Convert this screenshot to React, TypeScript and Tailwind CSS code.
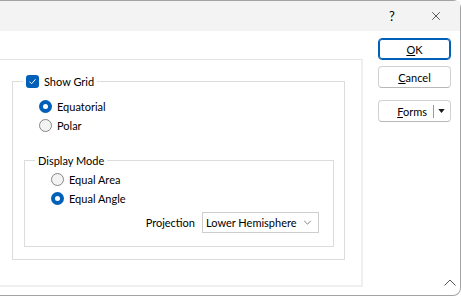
import { X } from "lucide-react";

function Radio({ checked, label }: { checked?: boolean; label: string }) {
  return (
    <div className="flex h-[19px] items-center gap-[5px]">
      {checked ? (
        <span className="flex size-[13px] items-center justify-center rounded-full bg-[#005fb8]">
          <span className="size-[5px] rounded-full bg-white" />
        </span>
      ) : (
        <span className="size-[13px] rounded-full border border-[#858585] bg-[#f3f3f3]" />
      )}
      <span>{label}</span>
    </div>
  );
}

function DialogButton({
  children,
  primary,
  className = "",
}: {
  children: React.ReactNode;
  primary?: boolean;
  className?: string;
}) {
  return (
    <button
      className={`flex h-[22px] w-[73px] items-center justify-center rounded-[4px] border bg-white ${
        primary
          ? "border-[#005fb8] shadow-[inset_0_0_0_1px_#005fb8]"
          : "border-[#d1d1d1] border-b-[#b8b8b8]"
      } ${className}`}
    >
      {children}
    </button>
  );
}

export default function App() {
  return (
    <div className="h-[296px] w-[461px] overflow-hidden whitespace-nowrap bg-white font-['Lato',sans-serif] text-[11px] leading-none text-black">
      <div className="flex h-[296px] flex-col rounded-r-[8px] border-y border-r border-[#a3a3a3] bg-white">
        <div className="flex h-[30px] shrink-0 items-center justify-end bg-[#f3f3f3] pr-[2px]">
          <div className="flex w-[44px] justify-center text-[13px]">?</div>
          <div className="flex w-[44px] justify-center">
            <X className="size-[14px]" strokeWidth={1.1} aria-hidden="true" />
          </div>
        </div>

        <div className="flex flex-1">
          <div className="mt-[28px] h-[228px] w-[363px] shrink-0 border-t border-r-2 border-b-2 border-t-[#e3e3e3] border-r-[#efefef] border-b-[#efefef]">
            <fieldset className="ml-[12px] mt-[14px] h-[186px] w-[333px] border border-[#dcdcdc]">
              <legend className="ml-[10px] flex h-[14px] items-center gap-[5px] px-[3px]">
                <span className="flex size-[13px] items-center justify-center rounded-[3px] bg-[#005fb8]">
                  <svg viewBox="0 0 12 12" className="size-[9px]" fill="none">
                    <path d="M2 6.2 4.8 9 10 3" stroke="white" strokeWidth="1.3" />
                  </svg>
                </span>
                <span>Show Grid</span>
              </legend>

              <div className="mt-[9px] pl-[26px]">
                <Radio checked label="Equatorial" />
                <Radio label="Polar" />
              </div>

              <fieldset className="ml-[11px] mt-[17px] h-[95px] w-[310px] border border-[#dcdcdc]">
                <legend className="ml-[10px] flex h-[16px] items-center px-[3px]">Display Mode</legend>
                <div className="mt-[2px] pl-[26px]">
                  <Radio label="Equal Area" />
                  <Radio checked label="Equal Angle" />
                </div>
                <div className="mt-[4px] flex items-center justify-end gap-[7px] pr-[14px]">
                  <span>Projection</span>
                  <div className="flex h-[21px] w-[117px] items-center justify-between border border-[#cdcdcd] pl-[3px] pr-[6px]">
                    <span>Lower Hemisphere</span>
                    <svg viewBox="0 0 10 6" className="h-[5px] w-[9px]" fill="none">
                      <path d="M1 1 5 5 9 1" stroke="#6b6b6b" strokeWidth="1" />
                    </svg>
                  </div>
                </div>
              </fieldset>
            </fieldset>
          </div>

          <div className="flex flex-1 flex-col pt-[7px]">
            <div className="ml-[15px] flex flex-col">
              <DialogButton primary>
                <span><span className="underline">O</span>K</span>
              </DialogButton>
              <DialogButton className="mt-[6px]">
                <span><span className="underline">C</span>ancel</span>
              </DialogButton>
              <DialogButton className="mt-[12px] justify-end pr-[5px]">
                <span className="mr-[6px]"><span className="underline">F</span>orms</span>
                <span className="h-[13px] w-px bg-[#9a9a9a]" />
                <svg viewBox="0 0 8 5" className="ml-[4px] h-[4px] w-[7px]">
                  <path d="M0 0h8L4 5z" fill="#1a1a1a" />
                </svg>
              </DialogButton>
            </div>
            <svg viewBox="0 0 12 7" className="mb-[9px] mr-[4px] mt-auto h-[7px] w-[12px] self-end" fill="none">
              <path d="M0.5 6.5 6 1l5.5 5.5" stroke="#555" strokeWidth="1" />
            </svg>
          </div>
        </div>
      </div>
    </div>
  );
}
